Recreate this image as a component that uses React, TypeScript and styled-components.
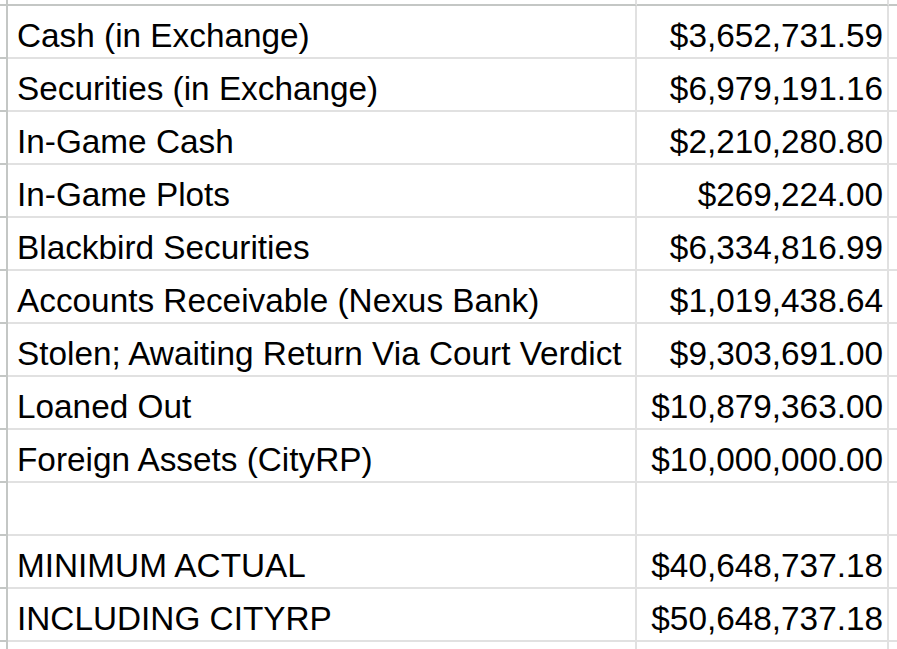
import React from "react";
import styled, { createGlobalStyle } from "styled-components";

const Global = createGlobalStyle`
  html, body { margin: 0; padding: 0; background: #ffffff; overflow: hidden; }
  body { font-family: "Liberation Sans", Arial, sans-serif; }
`;

const HEAD_LINE = "#c4c7c5";
const GRID_LINE = "#e1e1e1";

const Sheet = styled.div`
  width: 897px;
  height: 649px;
  overflow: hidden;
  display: flex;
  flex-direction: column;
`;

const Row = styled.div<{ $header?: boolean }>`
  display: grid;
  grid-template-columns: 8px 629px 252px 1fr;
  height: ${(p) => (p.$header ? 6 : 53)}px;
  flex: none;
`;

const Corner = styled.div`
  box-sizing: border-box;
  border-right: 2px solid ${HEAD_LINE};
  border-bottom: 2px solid ${HEAD_LINE};
`;

const Cell = styled.div<{ $header?: boolean; $align?: "left" | "right" }>`
  box-sizing: border-box;
  border-right: 2px solid ${GRID_LINE};
  border-bottom: 2px solid ${(p) => (p.$header ? HEAD_LINE : GRID_LINE)};
  display: flex;
  align-items: flex-end;
  justify-content: ${(p) => (p.$align === "right" ? "flex-end" : "flex-start")};
  padding: ${(p) => (p.$header ? "0" : "0 4px 2px 9px")};
  font-size: 33.33px;
  line-height: normal;
  color: #000000;
  white-space: nowrap;
  overflow: hidden;
`;

const Rest = styled.div<{ $header?: boolean }>`
  box-sizing: border-box;
  border-bottom: 2px solid ${(p) => (p.$header ? HEAD_LINE : GRID_LINE)};
`;

const rows: [string, string][] = [
  ["Cash (in Exchange)", "$3,652,731.59"],
  ["Securities (in Exchange)", "$6,979,191.16"],
  ["In-Game Cash", "$2,210,280.80"],
  ["In-Game Plots", "$269,224.00"],
  ["Blackbird Securities", "$6,334,816.99"],
  ["Accounts Receivable (Nexus Bank)", "$1,019,438.64"],
  ["Stolen; Awaiting Return Via Court Verdict", "$9,303,691.00"],
  ["Loaned Out", "$10,879,363.00"],
  ["Foreign Assets (CityRP)", "$10,000,000.00"],
  ["", ""],
  ["MINIMUM ACTUAL", "$40,648,737.18"],
  ["INCLUDING CITYRP", "$50,648,737.18"],
  ["", ""],
];

export default function App() {
  return (
    <>
      <Global />
      <Sheet>
        <Row $header>
          <Corner />
          <Cell $header />
          <Cell $header />
          <Rest $header />
        </Row>
        {rows.map(([label, value], i) => (
          <Row key={i}>
            <Corner />
            <Cell>{label}</Cell>
            <Cell $align="right">{value}</Cell>
            <Rest />
          </Row>
        ))}
      </Sheet>
    </>
  );
}
